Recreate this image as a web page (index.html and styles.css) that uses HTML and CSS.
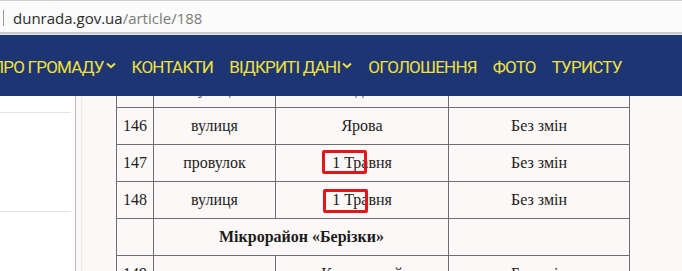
FILE: index.html
```html
<!DOCTYPE html>
<html lang="uk">
<head>
<meta charset="utf-8">
<title>dunrada.gov.ua</title>
<link rel="stylesheet" href="styles.css">
</head>
<body>
<div class="urlbar">
  <span class="caret"></span>
  <span class="domain">dunrada.gov.ua</span><span class="path">/article/188</span>
</div>
<nav class="topnav">
  <a class="item">ПРО ГРОМАДУ<svg class="chev" viewBox="0 0 10 7"><path d="M1 1.5 L5 5.2 L9 1.5"/></svg></a>
  <a class="item">КОНТАКТИ</a>
  <a class="item">ВІДКРИТІ ДАНІ<svg class="chev" viewBox="0 0 10 7"><path d="M1 1.5 L5 5.2 L9 1.5"/></svg></a>
  <a class="item">ОГОЛОШЕННЯ</a>
  <a class="item">ФОТО</a>
  <a class="item">ТУРИСТУ</a>
</nav>
<div class="main">
  <aside class="sidebar">
    <div class="sb-block first"></div>
    <div class="sb-block second"></div>
  </aside>
  <section class="content">
    <div class="inner">
      <div class="tablewrap">
        <table class="streets">
          <colgroup>
            <col class="c-num"><col class="c-type"><col class="c-name"><col class="c-note">
          </colgroup>
          <tr><td class="num">145</td><td>вулиця</td><td>Садова</td><td>Без змін</td></tr>
          <tr><td class="num">146</td><td>вулиця</td><td>Ярова</td><td>Без змін</td></tr>
          <tr><td class="num">147</td><td>провулок</td><td><span class="hl hl-a">1 Травня</span></td><td>Без змін</td></tr>
          <tr><td class="num">148</td><td>вулиця</td><td><span class="hl hl-b">1 Травня</span></td><td>Без змін</td></tr>
          <tr><td class="num"></td><td colspan="2" class="district">Мікрорайон «Берізки»</td><td></td></tr>
          <tr><td class="num">149</td><td>вулиця</td><td>Колгоспний</td><td>Без змін</td></tr>
        </table>
      </div>
    </div>
  </section>
</div>
</body>
</html>
```
FILE: styles.css
```css
html, body {
  margin: 0;
  padding: 0;
  width: 682px;
  height: 271px;
  overflow: hidden;
  background: #fdf8f8;
}

.urlbar {
  box-sizing: border-box;
  height: 34px;
  background: #fbfbfb;
  border-top: 1px solid #d0d0d0;
  border-bottom: 2px solid #c9c9c9;
  display: flex;
  align-items: center;
  padding-top: 2px;
  font-family: "Open Sans", "Noto Sans", sans-serif;
  font-size: 15px;
}
.caret {
  width: 1px;
  height: 16px;
  background: #9a9a9a;
  margin-left: 3px;
  margin-right: 9px;
}
.domain { color: #2b2b2b; }
.path { color: #7a7a7a; }

.topnav {
  height: 61px;
  background: #1e3573;
  border-top: 1px solid #e6e6e6;
  display: flex;
  align-items: center;
  gap: 16px;
  font-family: Roboto, "Open Sans", sans-serif;
  font-size: 17px;
  letter-spacing: -0.8px;
  color: #f0e23c;
  white-space: nowrap;
  overflow: hidden;
}
.item {
  display: flex;
  align-items: center;
  padding-top: 2px;
}
.item:first-child { margin-left: -8px; }
.chev {
  width: 10px;
  height: 7px;
  margin-left: 2px;
  margin-top: -2px;
  fill: none;
  stroke: #f0e23c;
  stroke-width: 2;
}

.main {
  display: flex;
  height: 175px;
}
.sidebar {
  width: 76px;
  flex: none;
  background: #fff;
  border-right: 1px solid #b9b9b9;
  padding-right: 4px;
  box-sizing: border-box;
}
.sb-block { border-bottom: 1px solid #e4e4e4; }
.sb-block.first { height: 16px; }
.sb-block.second { height: 98px; }

.content {
  flex: 1;
  padding-left: 5px;
  background: #fdf8f8;
}
.inner {
  height: 100%;
  border-left: 1px solid #f3e6e6;
  padding-left: 34px;
}
.tablewrap {
  height: 175px;
  overflow: hidden;
}
.streets {
  border-collapse: collapse;
  table-layout: fixed;
  width: 514px;
  margin-top: -26px;
  font-family: "Liberation Serif", "Times New Roman", serif;
  font-size: 16px;
  color: #1c1c1c;
}
.c-num { width: 37px; }
.c-type { width: 122px; }
.c-name { width: 173px; }
.c-note { width: 181px; }
.streets tr { height: 37px; }
.streets td {
  border: 1px solid #6e6e6e;
  text-align: center;
  padding: 0;
  white-space: nowrap;
}
.streets td.num {
  text-align: left;
  padding-left: 6px;
}
.streets td.district {
  font-weight: bold;
  text-align: left;
  padding-left: 65px;
}
.hl {
  position: relative;
  display: inline-block;
}
.hl::before {
  content: "";
  position: absolute;
  border: 3px solid #e3141c;
  border-radius: 2px;
  box-sizing: border-box;
  width: 45px;
  height: 24px;
}
.hl-a::before { left: -10px; top: -4px; }
.hl-b::before { left: -9px; top: -2px; }
```
